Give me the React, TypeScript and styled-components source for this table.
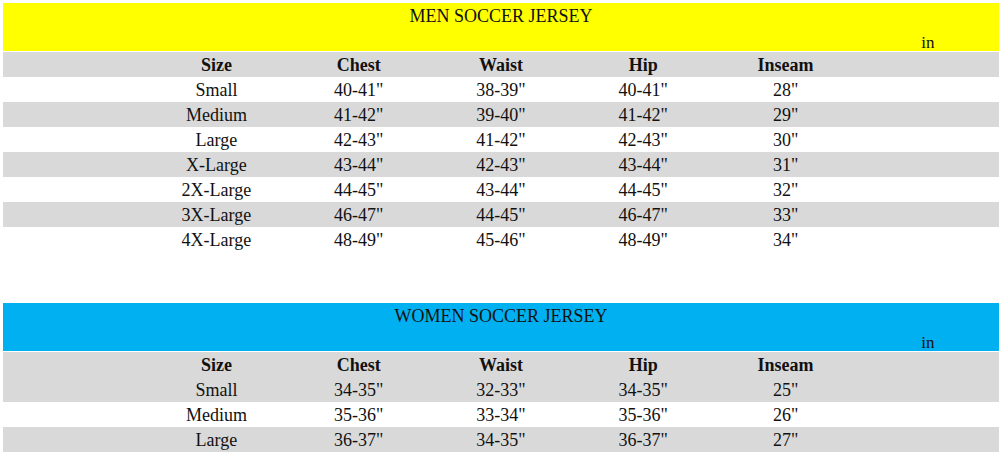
import React from 'react';
import styled, { createGlobalStyle } from 'styled-components';

const GlobalStyle = createGlobalStyle`
  body {
    margin: 0;
    padding: 3px 0 0 3px;
    background: #fff;
    font-family: "Liberation Serif", "Times New Roman", serif;
    color: #111;
  }
`;

type Row = [string, string, string, string, string];

const menRows: Row[] = [
  ['Small', '40-41"', '38-39"', '40-41"', '28"'],
  ['Medium', '41-42"', '39-40"', '41-42"', '29"'],
  ['Large', '42-43"', '41-42"', '42-43"', '30"'],
  ['X-Large', '43-44"', '42-43"', '43-44"', '31"'],
  ['2X-Large', '44-45"', '43-44"', '44-45"', '32"'],
  ['3X-Large', '46-47"', '44-45"', '46-47"', '33"'],
  ['4X-Large', '48-49"', '45-46"', '48-49"', '34"'],
];

const womenRows: Row[] = [
  ['Small', '34-35"', '32-33"', '34-35"', '25"'],
  ['Medium', '35-36"', '33-34"', '35-36"', '26"'],
  ['Large', '36-37"', '34-35"', '36-37"', '27"'],
];

const headers = ['Size', 'Chest', 'Waist', 'Hip', 'Inseam'];

function SizeTable({
  title,
  color,
  rows,
  grayFirst,
}: {
  title: string;
  color: string;
  rows: Row[];
  grayFirst?: boolean;
}) {
  return (
    <Table>
      <Band $color={color}>
        <Title>{title}</Title>
        <UnitRow>
          <span>in</span>
        </UnitRow>
      </Band>
      <GridRow $gray>
        <Cell />
        {headers.map((h) => (
          <HeadCell key={h}>{h}</HeadCell>
        ))}
        <Cell />
      </GridRow>
      {rows.map((r, i) => (
        <GridRow key={r[0]} $gray={grayFirst ? i % 2 === 0 : i % 2 === 1}>
          <Cell />
          {r.map((v, j) => (
            <Cell key={j}>{v}</Cell>
          ))}
          <Cell />
        </GridRow>
      ))}
    </Table>
  );
}

export default function App() {
  return (
    <>
      <GlobalStyle />
      <Page>
        <SizeTable title="MEN SOCCER JERSEY" color="#ffff00" rows={menRows} />
        <SizeTable
          title="WOMEN SOCCER JERSEY"
          color="#00b0f0"
          rows={womenRows}
          grayFirst
        />
      </Page>
    </>
  );
}

const Page = styled.div`
  width: 996px;
  display: flex;
  flex-direction: column;
  gap: 51px;
`;

const Table = styled.div`
  display: flex;
  flex-direction: column;
`;

const Band = styled.div<{ $color: string }>`
  background: ${(p) => p.$color};
  height: 48px;
  margin-bottom: 1px;
  display: flex;
  flex-direction: column;
`;

const Title = styled.div`
  height: 26px;
  line-height: 26px;
  text-align: center;
  font-size: 18px;
`;

const UnitRow = styled.div`
  display: grid;
  grid-template-columns: repeat(7, 1fr);
  height: 22px;
  line-height: 28px;
  font-size: 17px;

  span {
    grid-column: 7;
    text-align: center;
  }
`;

const GridRow = styled.div<{ $gray?: boolean }>`
  display: grid;
  grid-template-columns: repeat(7, 1fr);
  height: 25px;
  line-height: 27px;
  background: ${(p) => (p.$gray ? '#d9d9d9' : '#fff')};
  font-size: 18px;
`;

const Cell = styled.div`
  text-align: center;
  white-space: nowrap;
`;

const HeadCell = styled(Cell)`
  font-weight: bold;
`;
